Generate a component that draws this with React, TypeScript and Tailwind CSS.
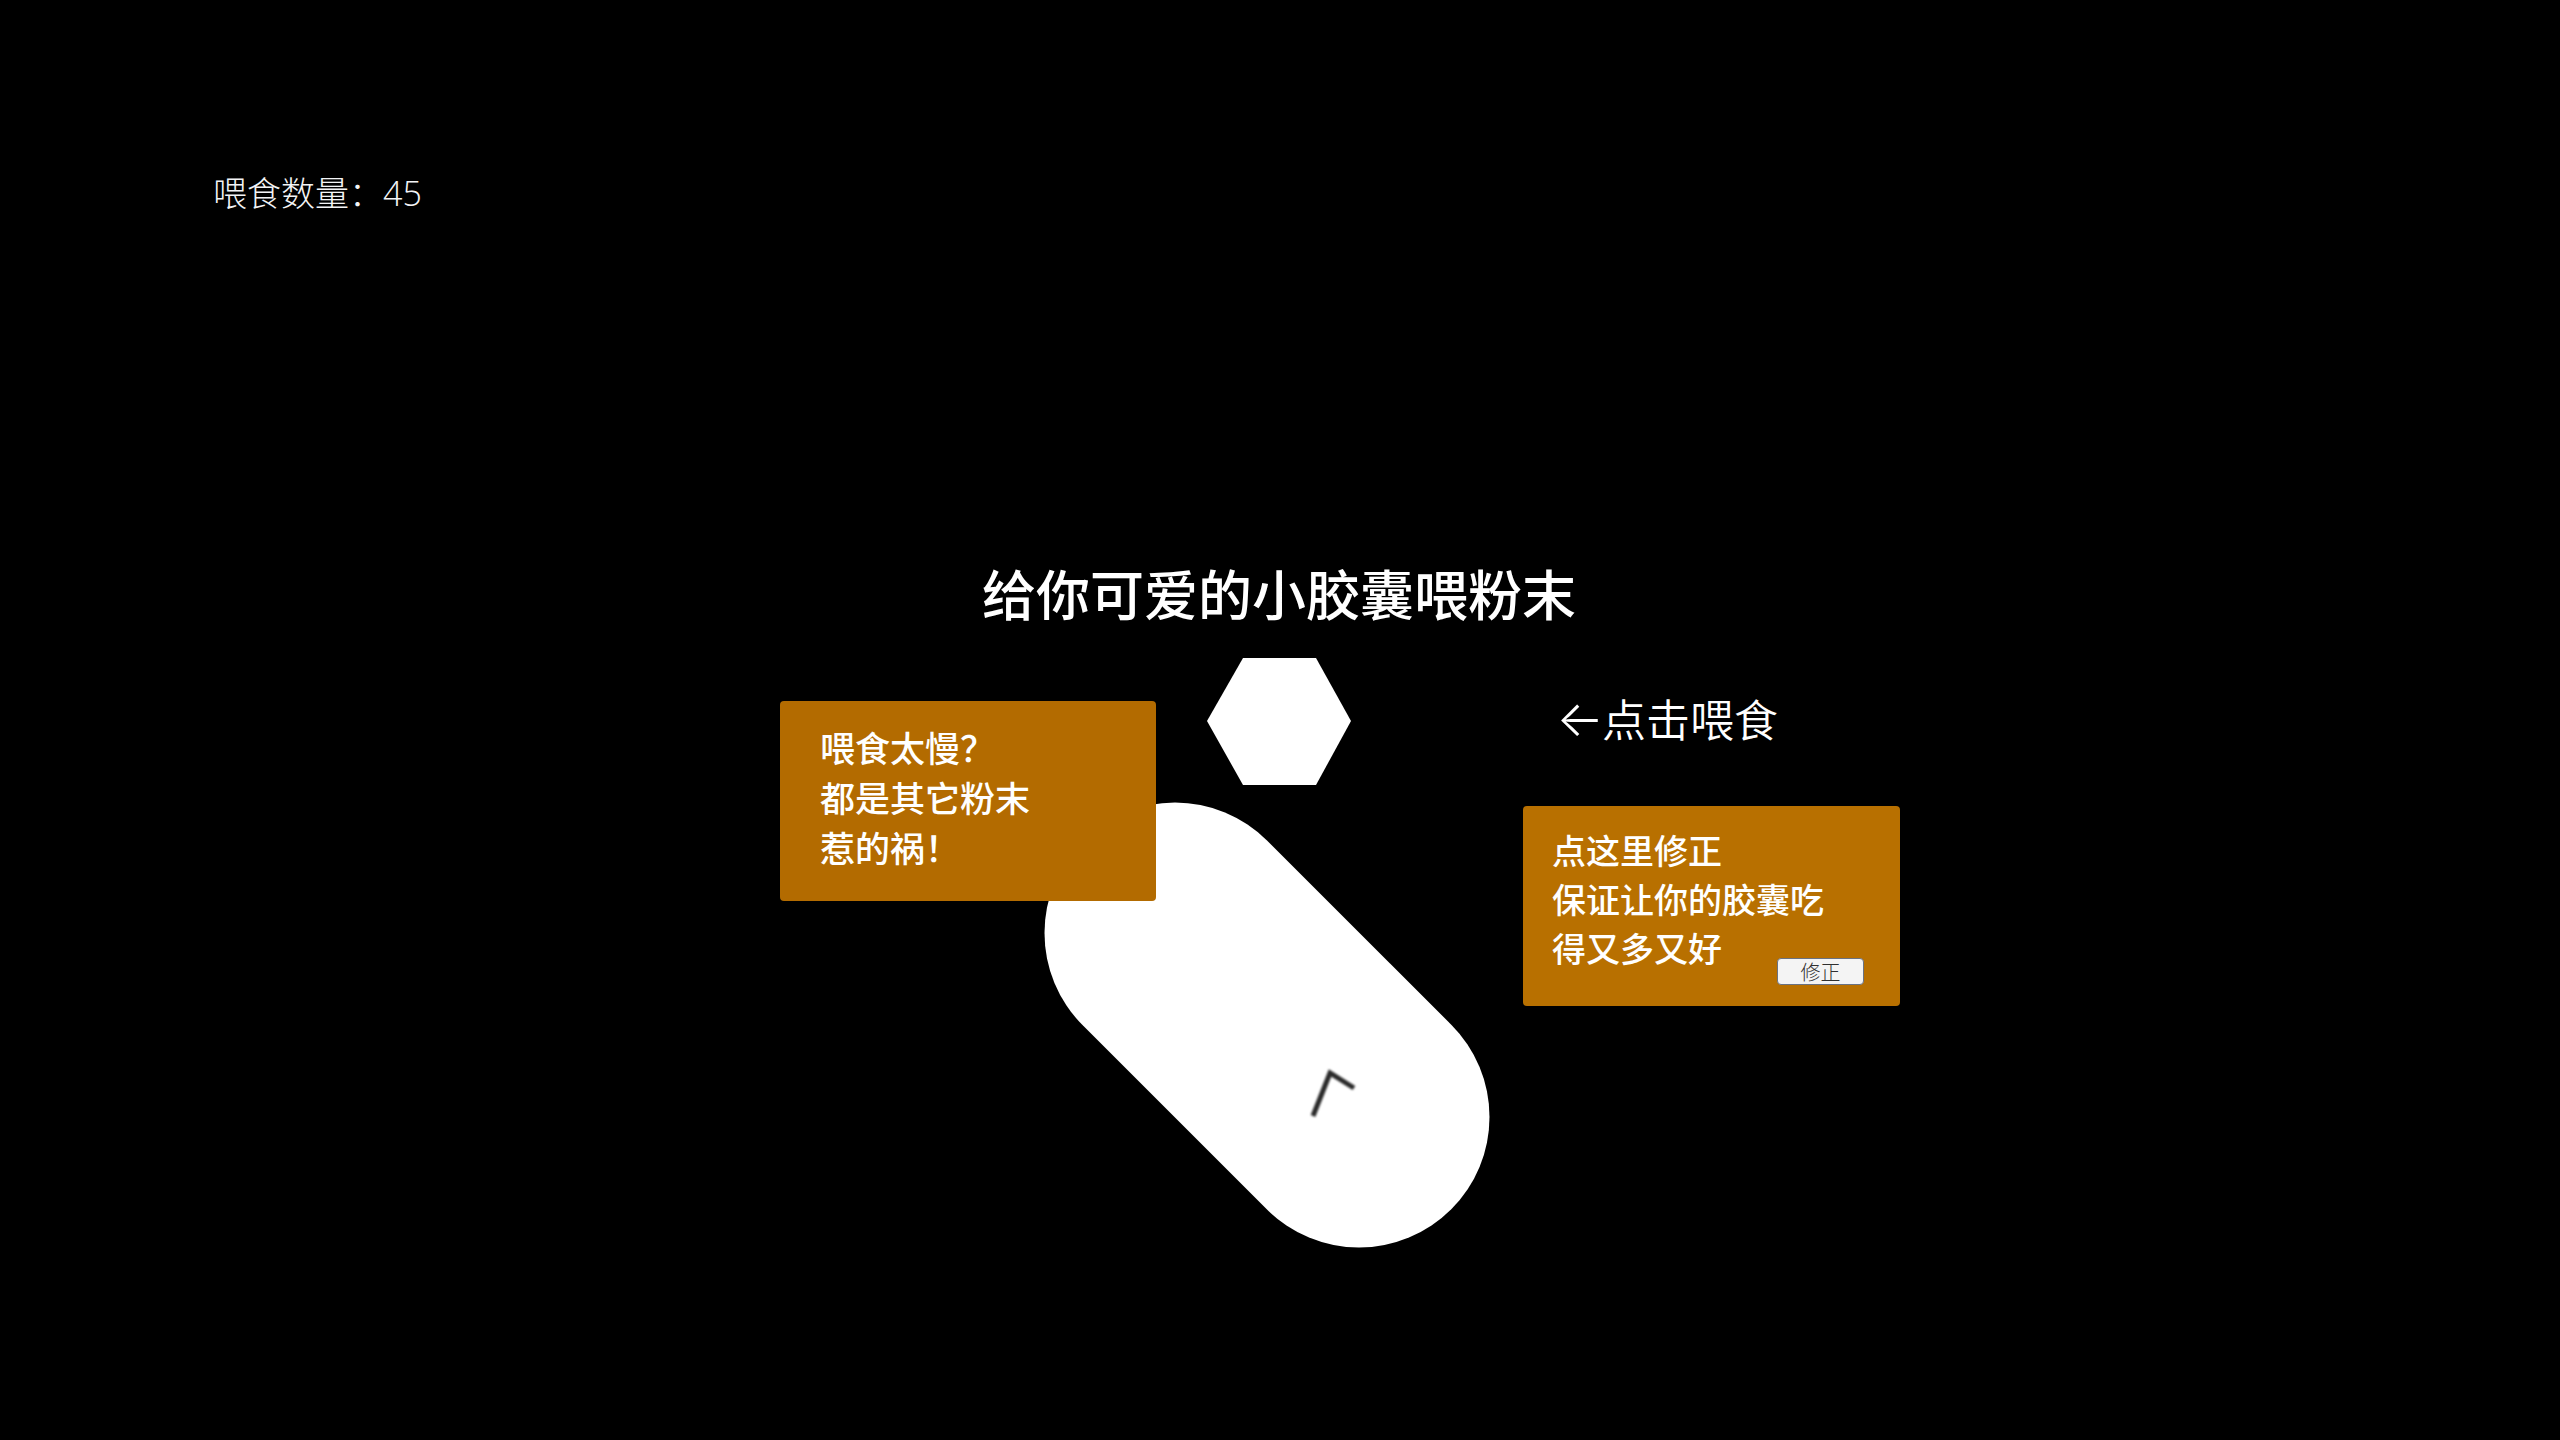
import { useState } from "react";

function Capsule() {
  return (
    <svg width="446" height="446" viewBox="0 0 446 446" role="img" aria-label="小胶囊">
      <path d="M131 131 L315 315" stroke="#fff" strokeWidth="261" strokeLinecap="round" />
      <path
        d="M269 314 L286 271 L310 286"
        fill="none"
        stroke="#2a2a2a"
        strokeWidth="5"
        className="blur-[1px]"
      />
    </svg>
  );
}

export default function App() {
  const [count, setCount] = useState(45);

  return (
    <div className="relative min-h-screen overflow-hidden bg-black font-['Noto_Sans_CJK_SC',sans-serif] text-white">
      <header className="px-[213px] pt-[168px]">
        <p className="text-[34px] leading-[48px] font-light text-gray-100">
          喂食数量：<span className="font-['Open_Sans',sans-serif]">{count}</span>
        </p>
      </header>

      <main className="mt-[340px] pr-[2px]">
        <h1 className="text-center text-[54px] leading-[72px] font-medium">给你可爱的小胶囊喂粉末</h1>

        <section className="relative mt-[29px]">
          <div className="grid grid-cols-[1fr_auto_1fr] items-center">
            <span />
            <button type="button" aria-label="喂食" onClick={() => setCount(count + 1)}>
              <svg width="144" height="127" viewBox="0 0 144 127" className="block">
                <path d="M36 0 H109 L144 63 L109 127 H36 L0 63 Z" fill="#fff" />
              </svg>
            </button>
            <p className="flex pb-2 pl-[207px] text-[44px] leading-[60px] font-[350]">
              <span className="flex w-11 justify-center font-['Inter',sans-serif] text-[50px] font-light">←</span>
              点击喂食
            </p>
          </div>

          <div className="mt-[17px] flex justify-center pr-6">
            <Capsule />
          </div>

          <aside className="absolute top-[43px] left-1/2 -ml-[499px] h-[200px] w-[376px] rounded bg-[#b36b00] px-10 py-[21px] text-[35px] leading-[50px] font-medium">
            <p>喂食太慢？</p>
            <p>都是其它粉末</p>
            <p>惹的祸！</p>
          </aside>

          <aside className="absolute top-[148px] left-1/2 ml-[244px] h-[200px] w-[377px] rounded bg-[#b87000] px-[29px] py-[19px] text-[34px] leading-[49px] font-medium">
            <p>点这里修正</p>
            <p>保证让你的胶囊吃</p>
            <p>得又多又好</p>
            <button
              type="button"
              className="absolute right-9 bottom-[21px] flex h-[27px] w-[87px] items-center justify-center rounded border border-gray-500 bg-[#f4f4f4] text-[20px] leading-none font-light text-[#303030]"
            >
              修正
            </button>
          </aside>
        </section>
      </main>
    </div>
  );
}
